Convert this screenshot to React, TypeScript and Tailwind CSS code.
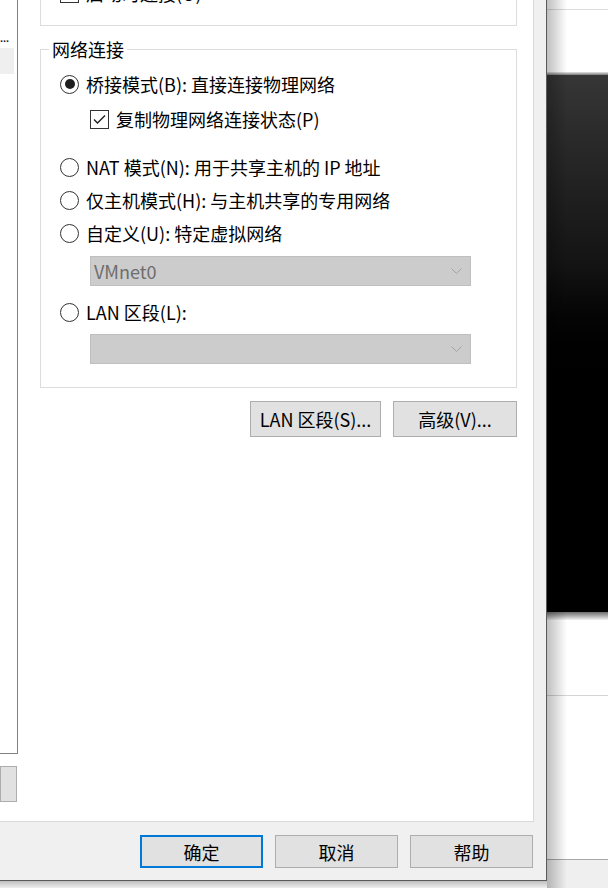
import React from 'react';

// Windows-style radio button
function Radio({ checked = false }: { checked?: boolean }) {
  return (
    <span className="flex h-[19px] w-[19px] shrink-0 items-center justify-center rounded-full border border-[#333333] bg-white">
      {checked && <span className="h-[10px] w-[10px] rounded-full bg-[#1f1f1f]" />}
    </span>
  );
}

function CheckBox({ checked = false }: { checked?: boolean }) {
  return (
    <span className="flex h-[19px] w-[19px] shrink-0 items-center justify-center border border-[#333333] bg-white">
      {checked && (
        <svg width="17" height="17" viewBox="0 0 17 17">
          <path d="M3 8.5 L6.5 12 L14 4.5" stroke="#1f1f1f" strokeWidth="1.4" fill="none" />
        </svg>
      )}
    </span>
  );
}

function Combo({ value = '' }: { value?: string }) {
  return (
    <div className="flex h-[30px] w-[381px] items-center justify-between border border-[#bfbfbf] bg-[#cccccc] pl-[3px] pr-[8px]">
      <span className="leading-[24px] text-[#6d6d6d]">{value}</span>
      <svg width="11" height="6" viewBox="0 0 11 6">
        <path d="M0.5 0.5 L5.5 5.5 L10.5 0.5" stroke="#a3a3a3" strokeWidth="1" fill="none" />
      </svg>
    </div>
  );
}

function Button({ label, width, primary = false }: { label: string; width: string; primary?: boolean }) {
  return (
    <div
      className={`flex items-center justify-center bg-[#e1e1e1] leading-[24px] ${width} ${
        primary ? 'border-2 border-[#0078d7]' : 'border border-[#adadad]'
      }`}
    >
      {label}
    </div>
  );
}

function OptionRow({ children, className = '' }: { children: React.ReactNode; className?: string }) {
  return <div className={`flex h-[32px] items-center gap-[7px] leading-[24px] ${className}`}>{children}</div>;
}

export default function App() {
  return (
    <div className="relative flex h-[888px] w-[608px] overflow-hidden bg-[#eeeeee] font-['Noto_Sans_CJK_SC',sans-serif] text-[18px] text-black">
      {/* dialog */}
      <div className="flex h-[881px] w-[547px] shrink-0 flex-col border-r border-b border-[#5a5a5a] bg-[#f0f0f0]">
        {/* tab page */}
        <div className="flex h-[822px] w-[534px] border-r border-b border-[#d9d9d9] bg-white">
          {/* hardware list, cut off on the left */}
          <div className="flex w-[18px] shrink-0 flex-col">
            <div className="h-[754px] border-r border-b border-[#828282] pt-[22px]">
              <div className="h-[26px] font-['Liberation_Sans',sans-serif] text-[11px] font-bold leading-[32px] text-[#222]">...</div>
              <div className="h-[26px] w-[14px] bg-[#efefef]" />
            </div>
            <div className="mt-[12px] h-[36px] w-[17px] border border-[#adadad] bg-[#e1e1e1]" />
          </div>

          {/* settings */}
          <div className="flex flex-1 flex-col">
            {/* device status group (mostly scrolled out) */}
            <div className="ml-[22px] h-[26px] w-[477px] border-x border-b border-[#dcdcdc]">
              <OptionRow className="-mt-[23px] pl-[19px]">
                <CheckBox />
                <span>启动时连接(O)</span>
              </OptionRow>
            </div>

            {/* network connection group */}
            <div className="ml-[22px] mt-[23px] flex w-[477px] flex-col border border-[#dcdcdc] pb-[23px]">
              <div className="-mt-[11px] ml-[8px] w-fit bg-white px-[3px] leading-[20px]">网络连接</div>

              <OptionRow className="mt-[9px] pl-[19px]">
                <Radio checked />
                <span>桥接模式(B): 直接连接物理网络</span>
              </OptionRow>
              <OptionRow className="mt-[3px] pl-[49px]">
                <CheckBox checked />
                <span>复制物理网络连接状态(P)</span>
              </OptionRow>

              <OptionRow className="mt-[16px] pl-[19px]">
                <Radio />
                <span>NAT 模式(N): 用于共享主机的 IP 地址</span>
              </OptionRow>
              <OptionRow className="mt-[1px] pl-[19px]">
                <Radio />
                <span>仅主机模式(H): 与主机共享的专用网络</span>
              </OptionRow>
              <OptionRow className="mt-[1px] pl-[19px]">
                <Radio />
                <span>自定义(U): 特定虚拟网络</span>
              </OptionRow>
              <div className="ml-[49px] mt-[7px]">
                <Combo value="VMnet0" />
              </div>

              <OptionRow className="mt-[10px] pl-[19px]">
                <Radio />
                <span>LAN 区段(L):</span>
              </OptionRow>
              <div className="ml-[49px] mt-[6px]">
                <Combo />
              </div>
            </div>

            <div className="ml-[22px] mt-[13px] flex w-[477px] justify-end gap-[12px]">
              <Button label="LAN 区段(S)..." width="h-[36px] w-[131px]" />
              <Button label="高级(V)..." width="h-[36px] w-[124px]" />
            </div>
          </div>
        </div>

        {/* dialog buttons */}
        <div className="flex justify-end gap-[12px] pr-[13px] pt-[13px]">
          <Button label="确定" width="h-[33px] w-[123px]" primary />
          <Button label="取消" width="h-[33px] w-[123px]" />
          <Button label="帮助" width="h-[33px] w-[123px]" />
        </div>
      </div>

      {/* window behind the dialog */}
      <div className="flex flex-1 flex-col">
        <div className="h-[9px] bg-white" />
        <div className="h-[1px] bg-[#dcdcdc]" />
        <div className="h-[62px] bg-white" />
        <div className="h-[3px] bg-linear-to-b from-[#e6e6e6] to-[#7a7a7a]" />
        <div className="h-[537px] bg-linear-to-b from-[#363636] via-[#141414] via-35% to-black to-60%" />
        <div className="h-[8px] bg-linear-to-b from-[#6e6e6e] to-[#f4f4f4]" />
        <div className="h-[75px] bg-white" />
        <div className="h-[1px] bg-[#d4d4d4]" />
        <div className="h-[163px] bg-white" />
        <div className="h-[1px] bg-[#a8a8a8]" />
        <div className="flex-1 bg-[#efefef]" />
      </div>

      {/* dialog drop shadows */}
      <div className="pointer-events-none absolute left-[547px] top-0 h-[888px] w-[20px] bg-linear-to-r from-black/25 to-transparent" />
      <div className="pointer-events-none absolute left-0 top-[881px] h-[7px] w-[547px] bg-linear-to-b from-black/20 to-transparent" />
    </div>
  );
}
